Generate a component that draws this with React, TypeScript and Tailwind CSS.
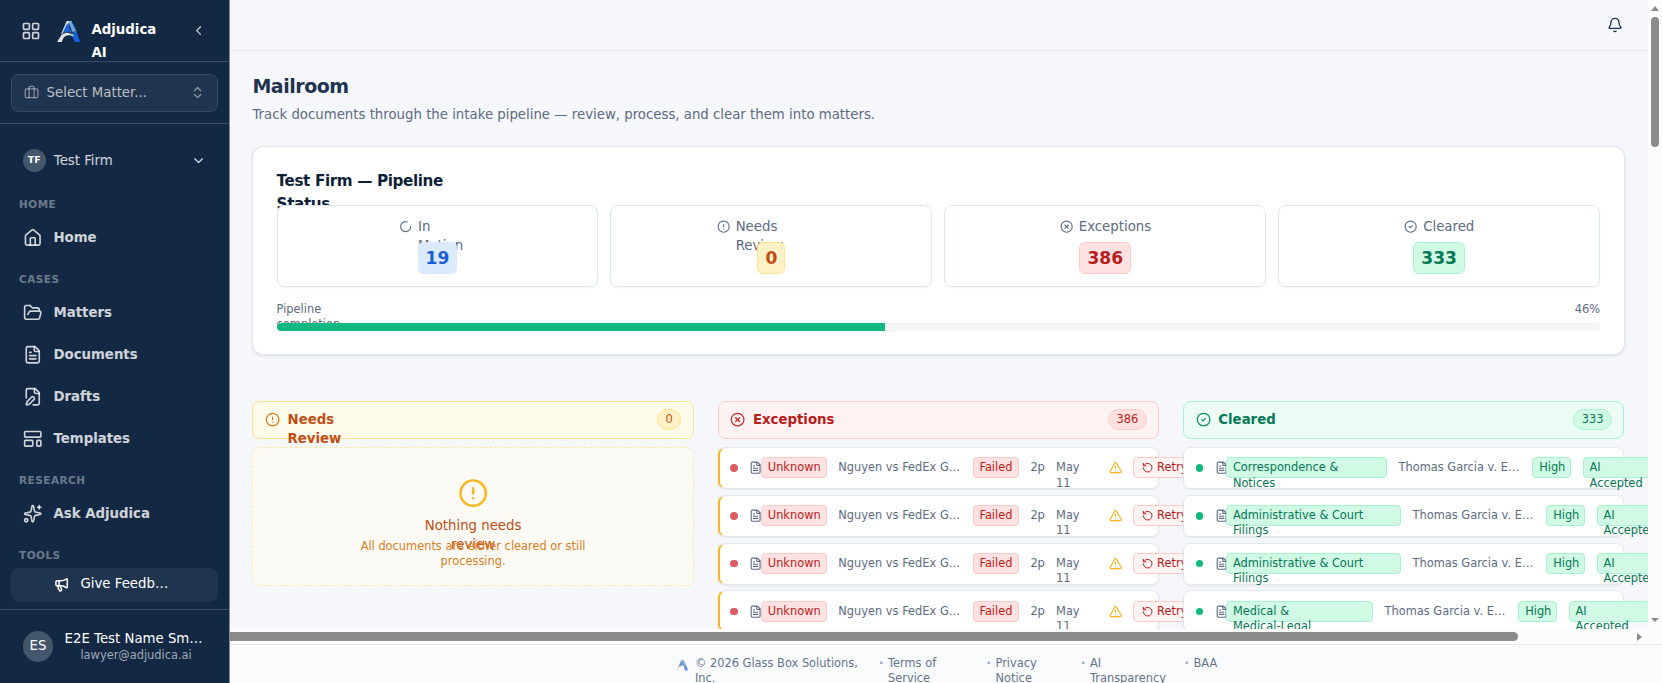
import React from 'react';
import {
  AlertCircle,
  Bell,
  Briefcase,
  CheckCircle2,
  ChevronDown,
  ChevronLeft,
  ChevronsUpDown,
  CircleX,
  FileText,
  FolderOpen,
  House,
  LayoutGrid,
  LoaderCircle,
  Megaphone,
  RotateCcw,
  Sparkles,
  TriangleAlert,
} from 'lucide-react';

// The whole app runs on a slightly denser rem
document.documentElement.classList.add('text-[15.2px]');

type Icon = React.ComponentType<{ className?: string; strokeWidth?: number }>;

interface NavSection {
  label: string;
  items: { name: string; icon: Icon }[];
}

const navSections: NavSection[] = [
  { label: 'HOME', items: [{ name: 'Home', icon: House }] },
  {
    label: 'CASES',
    items: [
      { name: 'Matters', icon: FolderOpen },
      { name: 'Documents', icon: FileText },
      { name: 'Drafts', icon: DraftIcon },
      { name: 'Templates', icon: TemplateIcon },
    ],
  },
  { label: 'RESEARCH', items: [{ name: 'Ask Adjudica', icon: Sparkles }] },
  { label: 'TOOLS', items: [] },
];

const stats = [
  {
    lines: ['In', 'Motion'],
    icon: LoaderCircle,
    value: 19,
    labelWidth: 'w-[58px]',
    badge: 'bg-[#dbeafe] border-[#dbeafe] text-[#1a5fd6]',
  },
  {
    lines: ['Needs', 'Review'],
    icon: AlertCircle,
    value: 0,
    labelWidth: 'w-[90.5px]',
    badge: 'bg-[#fef0c7] border-[#fde68a] text-[#bf4f14]',
  },
  {
    lines: ['Exceptions'],
    icon: CircleX,
    value: 386,
    labelWidth: 'w-[72px]',
    badge: 'bg-[#fee2e2] border-[#fecaca] text-[#b91c1c]',
  },
  {
    lines: ['Cleared'],
    icon: CheckCircle2,
    value: 333,
    labelWidth: 'w-[51px]',
    badge: 'bg-[#d1fae5] border-[#a7f3d0] text-[#047857]',
  },
];

const exceptionRows = [1, 2, 3, 4];

const clearedRows = [
  { id: 1, lines: ['Correspondence &', 'Notices'], width: 'w-[161px]' },
  { id: 2, lines: ['Administrative & Court', 'Filings'], width: 'w-[175px]' },
  { id: 3, lines: ['Administrative & Court', 'Filings'], width: 'w-[175px]' },
  { id: 4, lines: ['Medical &', 'Medical-Legal'], width: 'w-[147px]' },
];

const footerLinks = [
  { lines: ['Terms of', 'Service'], width: 'w-[98.5px]' },
  { lines: ['Privacy', 'Notice'], width: 'w-[85.5px]' },
  { lines: ['AI', 'Transparency'], width: 'w-[94.5px]' },
  { lines: ['BAA'], width: 'w-[30px]' },
];

function DraftIcon({ className }: { className?: string }) {
  return (
    <svg className={className} viewBox="0 0 24 24" fill="none" stroke="currentColor" strokeWidth="2" strokeLinecap="round" strokeLinejoin="round">
      <path d="M12.5 22H18a2 2 0 0 0 2-2V7l-5-5H6a2 2 0 0 0-2 2v9.5" />
      <path d="M14 2v4a2 2 0 0 0 2 2h4" />
      <path d="M13.378 15.626a1 1 0 1 0-3.004-3.004l-5.01 5.012a2 2 0 0 0-.506.854l-.837 2.87a.5.5 0 0 0 .62.62l2.87-.837a2 2 0 0 0 .854-.506z" />
    </svg>
  );
}

function TemplateIcon({ className }: { className?: string }) {
  return (
    <svg className={className} viewBox="0 0 24 24" fill="none" stroke="currentColor" strokeWidth="2" strokeLinecap="round" strokeLinejoin="round">
      <rect width="20" height="7" x="2" y="3" rx="1" />
      <rect width="10" height="7" x="2" y="14" rx="1" />
      <rect width="5" height="7" x="17" y="14" rx="1" />
    </svg>
  );
}

function Logo({ className }: { className?: string }) {
  return (
    <svg className={className} viewBox="0 0 24 24" fill="none">
      <path d="M10 1h5l1 4-4 1-3 7-5 2z" fill="#cfd8dd" />
      <path d="M10.5 4 13 6l.5 6-8 2.5z" fill="#1e63d0" />
      <path d="M12.5 2 15 1l5.500 11-6.500.5z" fill="#62a5ea" />
      <path d="M12 3.5l3.500 9" stroke="#122843" strokeWidth="1" />
      <path d="M14.5 13.5 20.5 12 24 23h-5.500z" fill="#1a5fdc" />
      <path d="M5 15c4-2.500 8-2.500 12 1l.5 1.500C13 15 9 15.500 6.500 19L5 23H0z" fill="#dfe3e6" />
      <path d="M4 15.5c4-3 9-3.500 14-1.500" stroke="#33475e" strokeWidth="1" />
      <path d="M16 14.5l1.500 1.200" stroke="#22c55e" strokeWidth="1.200" />
    </svg>
  );
}

// Renders each entry on its own line
function Lines({ lines }: { lines: string[] }) {
  return (
    <>
      {lines.map((line) => (
        <span key={line} className="block whitespace-nowrap">
          {line}
        </span>
      ))}
    </>
  );
}

function Sidebar() {
  return (
    <aside className="flex h-full w-[230px] shrink-0 flex-col border-r border-[#7d8b9c] bg-[#122843] text-white">
      <div className="flex h-[62px] shrink-0 items-start border-b border-[#3a4d65] pl-[20.5px] pr-[22.5px]">
        <LayoutGrid className="mt-[20.5px] h-[20px] w-[20px] shrink-0 text-white/80" />
        <Logo className="ml-[16.5px] mt-[20px] h-[23px] w-[23px] shrink-0" />
        <div className="ml-[11.5px] mt-[19px] flex-1 text-sm font-bold leading-[22.8px]">
          <Lines lines={['Adjudica', 'AI']} />
        </div>
        <ChevronLeft className="mt-[22.5px] size-4 shrink-0 text-white/80" />
      </div>

      <div className="shrink-0 border-b border-[#3a4d65] px-3 pb-3 pt-[11.5px]">
        <button className="flex h-[38px] w-full items-center gap-2 rounded-lg border border-[#384b62] bg-[#1f344e] px-3 text-sm text-white/70">
          <Briefcase className="size-4 shrink-0 text-white/45" />
          <span className="flex-1 pt-[2px] text-left">Select Matter...</span>
          <ChevronsUpDown className="size-4 shrink-0 text-white/50" />
        </button>
      </div>

      <div className="flex min-h-0 flex-1 flex-col">
        <div className="mt-[25px] flex h-6 items-center px-6">
          <span className="flex size-6 items-center justify-center rounded-full bg-[#44566b] text-[0.625rem] font-bold">TF</span>
          <span className="ml-2 flex-1 pl-[0.6px] pt-[1.5px] text-sm text-white/80">Test Firm</span>
          <ChevronDown className="size-4 text-white/80" />
        </div>

        <nav className="mt-[12px] flex flex-col">
          {navSections.map((section) => (
            <div key={section.label}>
              <div className="h-[33px] pl-[19px] pt-[13.5px] text-[0.6875rem] font-bold leading-[15px] tracking-wider text-white/40">
                {section.label}
              </div>
              {section.items.map(({ name, icon: ItemIcon }) => (
                <a key={name} className="flex h-[42px] items-center gap-[11.2px] pl-6 text-sm font-semibold text-white/80">
                  <ItemIcon className="h-[19.5px] w-[19.5px] shrink-0" />
                  <span className="pt-[0.8px]">{name}</span>
                </a>
              ))}
            </div>
          ))}
        </nav>

        <button className="mx-3 flex h-[34.5px] shrink-0 items-center gap-3 rounded-lg bg-[#1f344e] pl-[42.5px] text-sm">
          <Megaphone className="size-4" strokeWidth={2.4} />
          <span>Give Feedb…</span>
        </button>
      </div>

      <div className="flex h-[74px] shrink-0 items-center border-t border-[#3a4d65] pl-6">
        <span className="flex size-8 items-center justify-center rounded-full bg-[#44566b] text-sm">ES</span>
        <div className="ml-3 w-[143px] text-center">
          <div className="whitespace-nowrap text-left text-sm leading-[17.5px]">E2E Test Name Sm…</div>
          <div className="text-xs text-white/60">lawyer@adjudica.ai</div>
        </div>
      </div>
    </aside>
  );
}

function PipelineStatus() {
  return (
    <section className="mt-[22.1px] flex h-[208.9px] flex-col rounded-xl border border-[#e2e8f0] bg-white pl-[23.2px] pr-[23.4px] pt-[23.3px] shadow-[0_1px_3px_rgba(15,35,65,0.12)]">
      <h2 className="h-[23px] text-base font-bold tracking-tight text-[#0f1f38]">
        <Lines lines={['Test Firm — Pipeline', 'Status']} />
      </h2>
      <div className="mt-[11.2px] grid grid-cols-4 gap-[12px]">
        {stats.map(({ lines, icon: StatIcon, value, labelWidth, badge }) => (
          <div key={lines[0]} className="flex h-[82px] flex-col items-center rounded-lg border border-[#e2e8f0] bg-white pt-[11px] shadow-[0_1px_2px_rgba(15,35,65,0.05)]">
            <div className="flex h-[19.7px] items-start gap-1.5 text-sm leading-[19.7px] text-[#5d6b82]">
              <StatIcon className="mt-[3px] size-3.5 shrink-0" />
              <div className={labelWidth}>
                <Lines lines={lines} />
              </div>
            </div>
            <span className={`mt-1.5 rounded-md border px-[7px] py-0.5 text-lg font-bold leading-7 ${badge}`}>{value}</span>
          </div>
        ))}
      </div>
      <div className="mt-[15.5px] flex h-4 shrink-0 justify-between text-xs text-[#5d6b82]">
        <div>
          <Lines lines={['Pipeline', 'completion']} />
        </div>
        <span>46%</span>
      </div>
      <div className="relative mt-[5.6px] h-[8px] shrink-0 overflow-hidden rounded-full bg-[#f4f4f5]">
        <div className="h-full w-[46%] bg-[#10b981]" />
      </div>
    </section>
  );
}

interface ColumnHeaderProps {
  lines: string[];
  count: number;
  icon: Icon;
  className: string;
  iconClass: string;
  badgeClass: string;
}

function ColumnHeader({ lines, count, icon: HeaderIcon, className, iconClass, badgeClass }: ColumnHeaderProps) {
  return (
    <div className={`flex h-[38px] items-center gap-2 rounded-lg border px-3 ${className}`}>
      <HeaderIcon className={`size-4 shrink-0 ${iconClass}`} />
      <div className="h-[17px] flex-1 text-sm font-bold">
        <Lines lines={lines} />
      </div>
      <span className={`rounded-full border px-2 py-0.5 text-xs ${badgeClass}`}>{count}</span>
    </div>
  );
}

function Tag({ lines, className }: { lines: string[]; className: string }) {
  return (
    <div className={`h-[21px] shrink-0 rounded border px-1.5 py-0.5 ${className}`}>
      <Lines lines={lines} />
    </div>
  );
}

const redTag = 'bg-[#fee2e2] border-[#fecaca] text-[#b91c1c]';
const greenTag = 'bg-[#d1fae5] border-[#a7f3d0] text-[#047857]';

function ExceptionRow() {
  return (
    <div className="flex h-[42px] items-center gap-3 rounded-lg border border-l-2 border-[#e2e8f0] border-l-[#fbb724] bg-white pl-[10.7px] text-xs text-[#5d6b82] shadow-[0_1px_2px_rgba(15,35,65,0.08)]">
      <span className="size-2 shrink-0 rounded-full bg-[#d95c5f]" />
      <FileText className="-mr-[13px] size-3.5 shrink-0" />
      <Tag lines={['Unknown']} className={`w-[65.8px] ${redTag}`} />
      <span className="w-[123px] shrink-0 whitespace-nowrap">Nguyen vs FedEx G…</span>
      <Tag lines={['Failed']} className={`w-[46.3px] ${redTag}`} />
      <span className="w-[14.3px] shrink-0">2p</span>
      <div className="h-4 w-[41.2px] shrink-0">
        <Lines lines={['May', '11']} />
      </div>
      <TriangleAlert className="size-3.5 shrink-0 text-[#fbb019]" />
      <button className="flex h-[21px] shrink-0 items-center gap-1 rounded border border-[#fecaca] bg-[#fef2f2] px-2 text-[#b91c1c]">
        <RotateCcw className="size-3" />
        Retry
      </button>
    </div>
  );
}

function ClearedRow({ lines, width }: { lines: string[]; width: string }) {
  return (
    <div className="flex h-[42px] items-center gap-3 rounded-lg border border-[#e2e8f0] bg-white pl-3 text-xs text-[#5d6b82] shadow-[0_1px_2px_rgba(15,35,65,0.08)]">
      <span className="size-2 shrink-0 rounded-full bg-[#10b981]" />
      <FileText className="-mr-[13px] size-3.5 shrink-0" />
      <Tag lines={lines} className={`${width} ${greenTag}`} />
      <span className="w-[122.5px] shrink-0 whitespace-nowrap">Thomas Garcia v. E…</span>
      <Tag lines={['High']} className={`w-[39px] ${greenTag}`} />
      <Tag lines={['AI', 'Accepted']} className={`w-[81px] ${greenTag}`} />
    </div>
  );
}

function Board() {
  return (
    <div className="mt-[46px] grid grid-cols-3 gap-[24px]">
      <div className="flex min-w-0 flex-col gap-[8px]">
        <ColumnHeader
          lines={['Needs', 'Review']}
          count={0}
          icon={AlertCircle}
          className="border-[#fde68a] bg-[#fffbeb] text-[#bf4f14]"
          iconClass="text-[#d97e1c]"
          badgeClass="border-[#fde68a] bg-[#fef0c7]"
        />
        <div className="flex h-[139px] flex-col items-center rounded-lg border border-dashed border-[#fde9a5] bg-[#fbfaf5] pt-8 text-center">
          <AlertCircle className="size-8 shrink-0 text-[#fbb724]" />
          <div className="mt-[8px] h-[19px] text-sm text-[#bf4f14]">
            <Lines lines={['Nothing needs', 'review']} />
          </div>
          <div className="mt-[3px] h-4 text-xs text-[#d97e1c]">
            <Lines lines={['All documents are either cleared or still', 'processing.']} />
          </div>
        </div>
      </div>

      <div className="flex min-w-0 flex-col gap-[8px]">
        <ColumnHeader
          lines={['Exceptions']}
          count={386}
          icon={CircleX}
          className="border-[#fecaca] bg-[#fef2f2] text-[#b91c1c]"
          iconClass="text-[#c92a2a]"
          badgeClass="border-[#fecaca] bg-[#fee2e2]"
        />
        <div className="flex flex-col gap-[5.8px]">
          {exceptionRows.map((id) => (
            <ExceptionRow key={id} />
          ))}
        </div>
      </div>

      <div className="flex min-w-0 flex-col gap-[8px]">
        <ColumnHeader
          lines={['Cleared']}
          count={333}
          icon={CheckCircle2}
          className="border-[#a7f3d0] bg-[#ecfdf5] text-[#047857]"
          iconClass="text-[#0a8f66]"
          badgeClass="border-[#a7f3d0] bg-[#d1fae5]"
        />
        <div className="flex flex-col gap-[5.8px]">
          {clearedRows.map((row) => (
            <ClearedRow key={row.id} lines={row.lines} width={row.width} />
          ))}
        </div>
      </div>
    </div>
  );
}

function VerticalScrollbar() {
  return (
    <div className="flex w-[14.5px] shrink-0 flex-col items-center bg-[#fcfcfc]">
      <svg className="mt-[6px] h-[5px] w-[8px] shrink-0" viewBox="0 0 8 5">
        <path d="M4 0 8 5H0z" fill="#8b8b8b" />
      </svg>
      <div className="mt-[6px] h-[130px] w-[8px] rounded-full bg-[#8b8b8b]" />
      <svg className="mb-[7px] mt-auto h-[4px] w-[8px] shrink-0" viewBox="0 0 8 4">
        <path d="M0 0h8L4 4z" fill="#8b8b8b" />
      </svg>
    </div>
  );
}

function HorizontalScrollbar() {
  return (
    <div className="flex h-[15px] shrink-0 items-center bg-[#fcfcfc]">
      <div className="h-[9px] w-[1287.5px] rounded-r-full bg-[#8b8b8b]" />
      <svg className="ml-auto mr-[20px] h-[8px] w-[5px]" viewBox="0 0 5 8">
        <path d="M0 0v8l5-4z" fill="#8b8b8b" />
      </svg>
    </div>
  );
}

function Footer() {
  return (
    <footer className="flex min-h-0 flex-1 items-start overflow-hidden border-t border-[#e2e8f0] bg-[#f9fbfc] pl-[446px] pt-[11.2px] text-xs text-[#64748b]">
      <Logo className="mt-[2.5px] h-[12px] w-[12px] shrink-0 opacity-70" />
      <div className="ml-[7px] w-[184px] shrink-0">
        <Lines lines={['© 2026 Glass Box Solutions,', 'Inc.']} />
      </div>
      {footerLinks.map((link) => (
        <div key={link.lines[0]} className="flex shrink-0">
          <span className="w-[9px] shrink-0 font-bold text-[#94a3b8]">·</span>
          <div className={`shrink-0 ${link.width}`}>
            <Lines lines={link.lines} />
          </div>
        </div>
      ))}
    </footer>
  );
}

export default function App() {
  return (
    <div className="flex h-screen w-full overflow-hidden bg-[#f5f7fb] font-['DejaVu_Sans',sans-serif]">
      <Sidebar />
      <div className="flex min-w-0 flex-1 flex-col">
        <div className="flex h-[629px] shrink-0">
          <div className="min-w-0 flex-1 overflow-hidden">
            <header className="flex h-[51px] items-center justify-end border-b border-[#e4e9f0] pr-[24.5px]">
              <Bell className="mb-[1px] h-[16px] w-[16px] text-[#1e3350]" />
            </header>
            <main className="pl-[22.4px] pr-[23px] pt-[21.7px]">
              <h1 className="text-xl font-bold leading-[26px] tracking-tight text-[#1e3350]">Mailroom</h1>
              <p className="mt-[6.3px] text-sm leading-[19px] text-[#5d6b82]">
                Track documents through the intake pipeline — review, process, and clear them into matters.
              </p>
              <PipelineStatus />
              <Board />
            </main>
          </div>
          <VerticalScrollbar />
        </div>
        <HorizontalScrollbar />
        <Footer />
      </div>
    </div>
  );
}
